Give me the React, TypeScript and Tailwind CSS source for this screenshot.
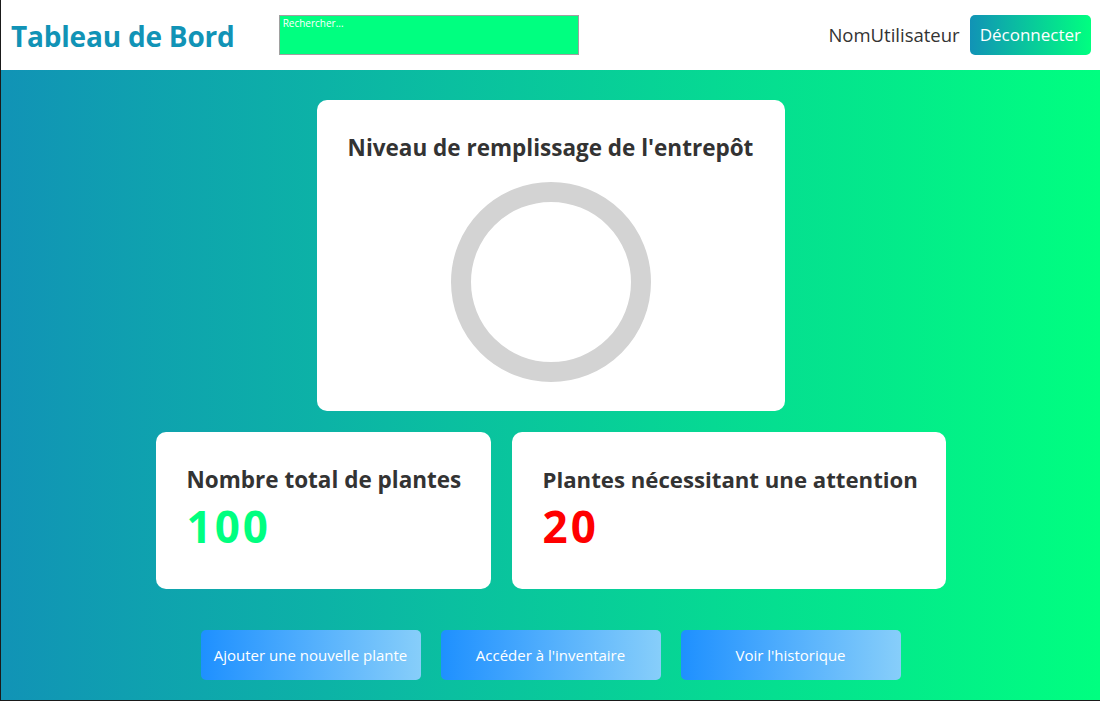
import React from "react";

export default function App() {
  const font = { fontFamily: '"Open Sans", "Noto Sans", sans-serif' };
  return (
    <div style={font} className="w-[1100px] h-[701px] flex flex-col border-l border-b border-[#1a1a1a] overflow-hidden">
      <header className="h-[70px] bg-white flex items-center pl-[10px] pr-[9px] shrink-0">
        <h1 className="text-[28px] font-bold text-[#1193b6] tracking-[-0.2px] leading-[38px] mt-[2px]">Tableau de Bord</h1>
        <div className="ml-[44px] w-[300px] h-[40px] bg-[#00ff80] border border-[#a0a0a0] px-[3px] pt-[1px] text-[10px] leading-[13px] text-white self-start mt-[15px]">
          Rechercher...
        </div>
        <div className="ml-auto flex items-center gap-[10px]">
          <span className="text-[18.5px] text-[#333]">NomUtilisateur</span>
          <button className="h-[40px] px-[10px] rounded-[5px] text-white text-[17px] bg-[linear-gradient(to_right,#1193b6,#00ff80)]">
            Déconnecter
          </button>
        </div>
      </header>
      <main className="flex-1 flex flex-col items-center pt-[30px] bg-[linear-gradient(to_right,#1193b6,#00ff80)]">
        <div className="w-[468px] h-[311px] bg-white rounded-[10px] flex flex-col items-center pt-[33px]">
          <h2 className="text-[22.5px] font-bold text-[#333] leading-[30px]">Niveau de remplissage de l'entrepôt</h2>
          <svg width="200" height="200" viewBox="0 0 200 200" className="mt-[19px]">
            <circle cx="100" cy="100" r="90" fill="none" stroke="#d3d3d3" strokeWidth="20" />
          </svg>
        </div>
        <div className="flex gap-[21px] mt-[21px]">
          <div className="w-[335px] h-[157px] bg-white rounded-[10px] pl-[31px] pt-[33px]">
            <h3 className="text-[22.5px] font-bold text-[#333] leading-[30px]">Nombre total de plantes</h3>
            <div className="text-[44px] font-bold text-[#00ff80] leading-[56px] mt-[3px] tracking-[3px]">100</div>
          </div>
          <div className="w-[434px] h-[157px] bg-white rounded-[10px] pl-[31px] pt-[33px]">
            <h3 className="text-[22.2px] font-bold text-[#333] leading-[30px]">Plantes nécessitant une attention</h3>
            <div className="text-[44px] font-bold text-[#ff0000] leading-[56px] mt-[3px] tracking-[3px]">20</div>
          </div>
        </div>
        <div className="flex gap-[20px] mt-[41px]">
          {["Ajouter une nouvelle plante", "Accéder à l'inventaire", "Voir l'historique"].map((t) => (
            <button
              key={t}
              className="w-[220px] h-[50px] rounded-[5px] text-white text-[15px] bg-[linear-gradient(to_right,#1e90ff,#87cefa)]"
            >
              {t}
            </button>
          ))}
        </div>
      </main>
    </div>
  );
}
